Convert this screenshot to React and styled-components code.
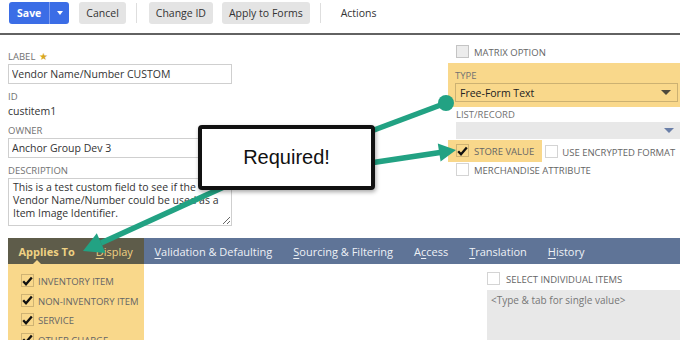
import React from 'react'
import styled, { createGlobalStyle } from 'styled-components';

const GlobalStyle = createGlobalStyle`
body {
    margin: 0;
    background: #fff;
    font-family: "Open Sans", "Liberation Sans", sans-serif;
    color: #333;
}
`

const Page = styled.div`
position: relative;
width: 680px;
height: 340px;
overflow: hidden;
display: flex;
flex-direction: column;

& > * {
    flex-shrink: 0;
}
`

const Toolbar = styled.div`
display: flex;
align-items: flex-start;
height: 31px;
padding: 2px 0 0 9px;
border-bottom: 2px solid #626262;
`

const SplitButton = styled.div`
display: flex;
height: 22px;
border-radius: 3px;
background: #3b6de6;
overflow: hidden;
`

const SaveLabel = styled.span`
display: flex;
align-items: center;
padding: 0 8px;
font-size: 10.5px;
font-weight: 700;
color: #fff;
border-right: 1px solid #7d9cf0;
`

const Caret = styled.span`
display: flex;
align-items: center;
justify-content: center;
width: 19px;

&::after {
    content: '';
    border-left: 3.5px solid transparent;
    border-right: 3.5px solid transparent;
    border-top: 4px solid #fff;
}
`

const Button = styled.button`
height: 22px;
margin-left: ${p => p.$gap || 0}px;
padding: 0 7px;
border: 0;
border-radius: 3px;
background: ${p => p.$plain ? 'transparent' : '#e4e4e4'};
font-family: "Open Sans", sans-serif;
font-size: 10.5px;
color: #333;
`

const Separator = styled.div`
width: 1px;
height: 20px;
margin: 1px 12px 0 10px;
background: #dedede;
`

const Form = styled.div`
display: grid;
grid-template-columns: 224px 1fr;
column-gap: 216px;
padding-left: 8px;
`

const LeftCol = styled.div`
display: flex;
flex-direction: column;
gap: 6px;
padding-top: 14px;
`

const Field = styled.div`
display: flex;
flex-direction: column;
`

const Label = styled.div`
font-size: 9.5px;
line-height: 14px;
text-transform: uppercase;
color: #727272;
`

const Star = styled.span`
margin-left: 4px;
color: #d9a81e;
font-size: 10px;
`

const Value = styled.div`
font-size: 10.5px;
line-height: 14px;
color: #333;
`

const Input = styled.input`
box-sizing: border-box;
width: 224px;
height: 20px;
padding: 0 3px;
border: 1px solid #cfcfcf;
font-family: "Open Sans", sans-serif;
font-size: 10.5px;
color: #333;
outline: none;
`

const TextArea = styled.textarea`
box-sizing: border-box;
width: 224px;
height: 48px;
padding: 2px 4px;
border: 1px solid #cfcfcf;
font-family: "Open Sans", sans-serif;
font-size: 10.5px;
line-height: 13px;
color: #333;
resize: vertical;
overflow: hidden;
outline: none;
`

const RightCol = styled.div`
display: flex;
flex-direction: column;
padding-top: 10px;
`

const CheckRow = styled.label`
display: flex;
align-items: flex-end;
gap: ${p => p.$gap || 5}px;
padding: ${p => p.$pad || '0 0 0 8px'};
margin-top: ${p => p.$top || 0}px;
background: ${p => p.$highlight ? '#f9d88b' : 'transparent'};
font-size: 9.5px;
line-height: 10px;
text-transform: uppercase;
color: #666;
white-space: nowrap;
`

const Box = styled.span`
box-sizing: border-box;
display: flex;
align-items: center;
justify-content: center;
flex: none;
width: 13px;
height: 13px;
border: 1px solid rgba(0, 0, 0, 0.17);
background: ${p => p.$disabled ? '#ececec' : 'transparent'};
`

const TypeBlock = styled.div`
margin-top: 5px;
padding: 6px 2px 5px 7px;
background: #f9d88b;
`

const Select = styled.div`
box-sizing: border-box;
display: flex;
align-items: center;
height: ${p => p.$muted ? 17 : 19}px;
padding: 0 6px 0 4px;
border: ${p => p.$muted ? '0' : '1px solid rgba(0,0,0,0.18)'};
background: ${p => p.$muted ? '#e8e8e8' : 'transparent'};
font-size: 10.5px;
color: #222;

&::after {
    content: '';
    margin-left: auto;
    border-left: 5px solid transparent;
    border-right: 5px solid transparent;
    border-top: 5px solid ${p => p.$muted ? '#6a7fa8' : '#4f4a3c'};
}
`

const ListBlock = styled.div`
margin-top: 1px;
padding-left: 8px;
`

const OptionRow = styled.div`
display: flex;
align-items: center;
gap: 3px;
margin-top: 1px;
`

const TabBar = styled.div`
display: flex;
height: 26px;
margin: 12px 0 0 8px;
background: #5f7497;
`

const TabGroup = styled.div`
display: flex;
flex: none;
width: 136px;
background: #5e5c4a;
overflow: hidden;
`

const Tab = styled.div`
position: relative;
display: flex;
align-items: center;
padding: 0 10.5px;
font-size: 11px;
font-weight: ${p => p.$active ? 700 : 400};
color: ${p => p.$tint ? '#efd183' : '#eef1f6'};
white-space: nowrap;

u {
    text-decoration: underline;
    text-underline-offset: 2px;
}

${p => p.$active && `
    &::after {
        content: '';
        position: absolute;
        left: 25px;
        bottom: 0;
        border-left: 4px solid transparent;
        border-right: 4px solid transparent;
        border-bottom: 4px solid #f9d88b;
    }
`}
`

const TabContent = styled.div`
flex: 1 0 auto;
display: grid;
grid-template-columns: 136px 1fr;
margin-left: 8px;
`

const AppliesPanel = styled.div`
display: flex;
flex-direction: column;
gap: 6.5px;
padding: 10px 0 0 5px;
background: #f9d88b;
`

const ItemsPanel = styled.div`
display: flex;
flex-direction: column;
padding: 8px 0 0 343px;
`

const MultiSelect = styled.div`
flex: 1;
margin-top: 5px;
padding: 3px 4px;
background: #e8e8e8;
font-size: 10px;
color: #777;
`

const Overlay = styled.svg`
position: absolute;
top: 0;
left: 0;
pointer-events: none;
`

const Callout = styled.div`
position: absolute;
left: 198px;
top: 125px;
box-sizing: border-box;
width: 177px;
height: 65px;
display: flex;
align-items: center;
justify-content: center;
border: 4px solid #111;
border-radius: 4px;
background: #fff;
box-shadow: 1px 2px 4px rgba(0, 0, 0, 0.35);
font-family: "Liberation Sans", Arial, sans-serif;
font-size: 20px;
color: #111;
`

const Check = () => (
    <svg width="11" height="10" viewBox="0 0 11 10">
        <path d="M1.2 5.2 L4 8.2 L9.8 1.4" fill="none" stroke="#111" strokeWidth="2.3" />
    </svg>
)

const CheckBox = ({ checked, disabled }) => (
    <Box $disabled={disabled}>{checked && <Check />}</Box>
)

const appliesTo = ['Inventory Item', 'Non-Inventory Item', 'Service', 'Other Charge'];

const tabs = [
    [<><u>V</u>alidation &amp; Defaulting</>, 'validation'],
    [<><u>S</u>ourcing &amp; Filtering</>, 'sourcing'],
    [<>A<u>c</u>cess</>, 'access'],
    [<><u>T</u>ranslation</>, 'translation'],
    [<><u>H</u>istory</>, 'history'],
];

const teal = '#22a283';

export default function App() {
    return (
        <Page>
            <GlobalStyle />
            <Toolbar>
                <SplitButton>
                    <SaveLabel>Save</SaveLabel>
                    <Caret />
                </SplitButton>
                <Button $gap={10}>Cancel</Button>
                <Separator />
                <Button>Change ID</Button>
                <Button $gap={9}>Apply to Forms</Button>
                <Separator />
                <Button $plain $gap={1}>Actions</Button>
            </Toolbar>

            <Form>
                <LeftCol>
                    <Field>
                        <Label>Label<Star>★</Star></Label>
                        <Input readOnly value="Vendor Name/Number CUSTOM" />
                    </Field>
                    <Field>
                        <Label>ID</Label>
                        <Value>custitem1</Value>
                    </Field>
                    <Field>
                        <Label>Owner</Label>
                        <Input readOnly value="Anchor Group Dev 3" />
                    </Field>
                    <Field>
                        <Label>Description</Label>
                        <TextArea readOnly value="This is a test custom field to see if the Vendor Name/Number could be used as a Item Image Identifier." />
                    </Field>
                </LeftCol>

                <RightCol>
                    <CheckRow>
                        <CheckBox disabled />
                        Matrix Option
                    </CheckRow>
                    <TypeBlock>
                        <Label>Type</Label>
                        <Select>Free-Form Text</Select>
                    </TypeBlock>
                    <ListBlock>
                        <Label>List/Record</Label>
                        <Select $muted />
                    </ListBlock>
                    <OptionRow>
                        <CheckRow $highlight $pad="4px 8px 5px 8px">
                            <CheckBox checked />
                            Store Value
                        </CheckRow>
                        <CheckRow $pad="0" $gap={4}>
                            <CheckBox />
                            Use Encrypted Format
                        </CheckRow>
                    </OptionRow>
                    <CheckRow $top={1}>
                        <CheckBox />
                        Merchandise Attribute
                    </CheckRow>
                </RightCol>
            </Form>

            <TabBar>
                <TabGroup>
                    <Tab $active $tint>Applies To</Tab>
                    <Tab $tint><u>D</u>isplay</Tab>
                </TabGroup>
                {tabs.map(([label, key]) => <Tab key={key}>{label}</Tab>)}
            </TabBar>

            <TabContent>
                <AppliesPanel>
                    {appliesTo.map(item => (
                        <CheckRow key={item} $gap={4}>
                            <CheckBox checked />
                            {item}
                        </CheckRow>
                    ))}
                </AppliesPanel>
                <ItemsPanel>
                    <CheckRow $pad="0" $gap={6}>
                        <CheckBox />
                        Select Individual Items
                    </CheckRow>
                    <MultiSelect>&lt;Type &amp; tab for single value&gt;</MultiSelect>
                </ItemsPanel>
            </TabContent>

            <Overlay width="680" height="340" viewBox="0 0 680 340">
                <line x1="366" y1="133" x2="446" y2="103" stroke={teal} strokeWidth="5.5" />
                <circle cx="446" cy="103" r="8" fill={teal} />
                <line x1="370" y1="163" x2="440" y2="152.5" stroke={teal} strokeWidth="5.5" />
                <polygon points="456,150 440.6,161.5 437.8,143.6" fill={teal} />
                <line x1="226" y1="186" x2="101" y2="243" stroke={teal} strokeWidth="5.5" />
                <polygon points="83,251 105.5,253 96.8,233.2" fill={teal} />
            </Overlay>
            <Callout>Required!</Callout>
        </Page>
    );
}
